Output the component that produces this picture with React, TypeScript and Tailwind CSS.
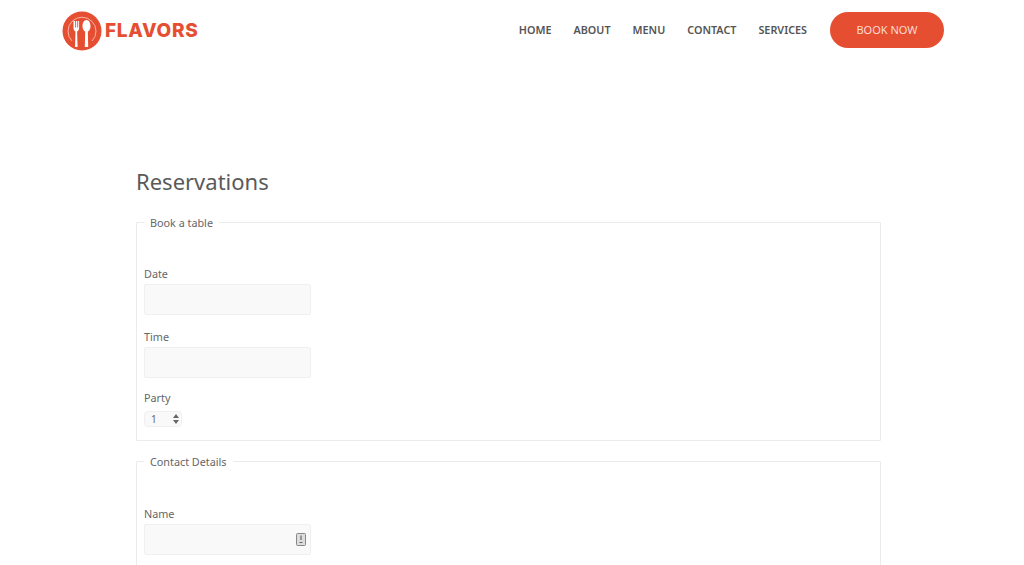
const navItems = ["HOME", "ABOUT", "MENU", "CONTACT", "SERVICES"];

const Logo = () => (
  <svg width="40" height="40" viewBox="0 0 40 40" className="shrink-0">
    <circle cx="20" cy="20" r="19.5" fill="#e64e31" />
    <path d="M10 30A14 14 0 1 1 30 30" fill="none" stroke="#f6b7a8" strokeWidth="1" />
    <path d="M11.500 10v7c0 1.800.9 2.900 2 3.400L13 36h2.600l-.5-15.600c1.100-.5 2-1.600 2-3.400v-7h-.9v6.500h-.9V10h-1.200v6.500h-.9V10z" fill="#fff" />
    <path d="M24.500 9c-2.400 0-4 2.900-4 6.200 0 2.700 1.300 4.700 2.700 5.400L22.800 36h3.400l-.4-15.400c1.400-.7 2.700-2.700 2.700-5.400 0-3.300-1.600-6.200-4-6.200z" fill="#fff" />
  </svg>
);

const Field = ({ label, icon }: { label: string; icon?: boolean }) => (
  <div>
    <label className="block text-[10.800px] leading-[14px] text-[#666]">{label}</label>
    <div className="relative mt-[3px] h-[31px] w-[167px] rounded-[2px] border border-[#f0f0f0] bg-[#f9f9f9]">
      {icon && (
        <svg width="10" height="13" viewBox="0 0 10 13" className="absolute right-[4px] top-[8px]">
          <rect x="0.500" y="0.500" width="9" height="12" rx="1" fill="#ddd" stroke="#888" />
          <path d="M5 2.500v4.500M3.500 9.500h3" stroke="#666" strokeWidth="1.200" />
        </svg>
      )}
    </div>
  </div>
);

export default function App() {
  return (
    <div className="h-[565px] w-[1024px] overflow-hidden bg-white font-['Noto_Sans',sans-serif] text-[#666]">
      <header className="flex h-[60px] items-center justify-between pl-[62px] pr-[80px]">
        <div className="mt-[2px] flex items-center gap-[3px]">
          <Logo />
          <span className="font-['Inter',sans-serif] text-[19px] font-extrabold tracking-[0.700px] text-[#e64e31]">FLAVORS</span>
        </div>
        <nav className="flex items-center gap-[22px]">
          {navItems.map((item) => (
            <a key={item} className="mt-[1px] text-[10.800px] font-semibold text-[#555]">{item}</a>
          ))}
          <a className="ml-[1px] flex h-[36px] w-[114px] items-center justify-center rounded-full bg-[#e64e31] pt-[1px] text-[11px] text-[#fbdcd4]">BOOK NOW</a>
        </nav>
      </header>

      <main className="ml-[136px] w-[745px] pt-[106px]">
        <h1 className="text-[22px] leading-[30px] text-[#5a5a5a]">Reservations</h1>
        <fieldset className="mt-[18px] h-[227px] rounded-[1px] border border-[#ebebeb] px-[7px]">
          <legend className="px-[6px] pt-[2px] text-[10.800px] leading-[14px]">Book a table</legend>
          <div className="flex flex-col gap-[15px] pt-[37px]">
            <Field label="Date" />
            <Field label="Time" />
          </div>
          <label className="mt-[13px] block text-[10.800px] leading-[14px]">Party</label>
          <div className="mt-[6px] flex h-[16px] w-[38px] items-center justify-between rounded-[4px] border border-[#f0f0f0] bg-[#f9f9f9] pl-[6px] pr-[2px] text-[10px]">
            <span>1</span>
            <svg width="6" height="10" viewBox="0 0 6 10">
              <path d="M3 0l3 4H0zM3 10L0 6h6z" fill="#666" />
            </svg>
          </div>
        </fieldset>
        <fieldset className="mt-[12px] h-[201px] rounded-[1px] border border-[#ebebeb] px-[7px]">
          <legend className="px-[6px] pt-[2px] text-[10.800px] leading-[14px]">Contact Details</legend>
          <div className="pt-[38px]">
            <Field label="Name" icon />
          </div>
        </fieldset>
      </main>
    </div>
  );
}
